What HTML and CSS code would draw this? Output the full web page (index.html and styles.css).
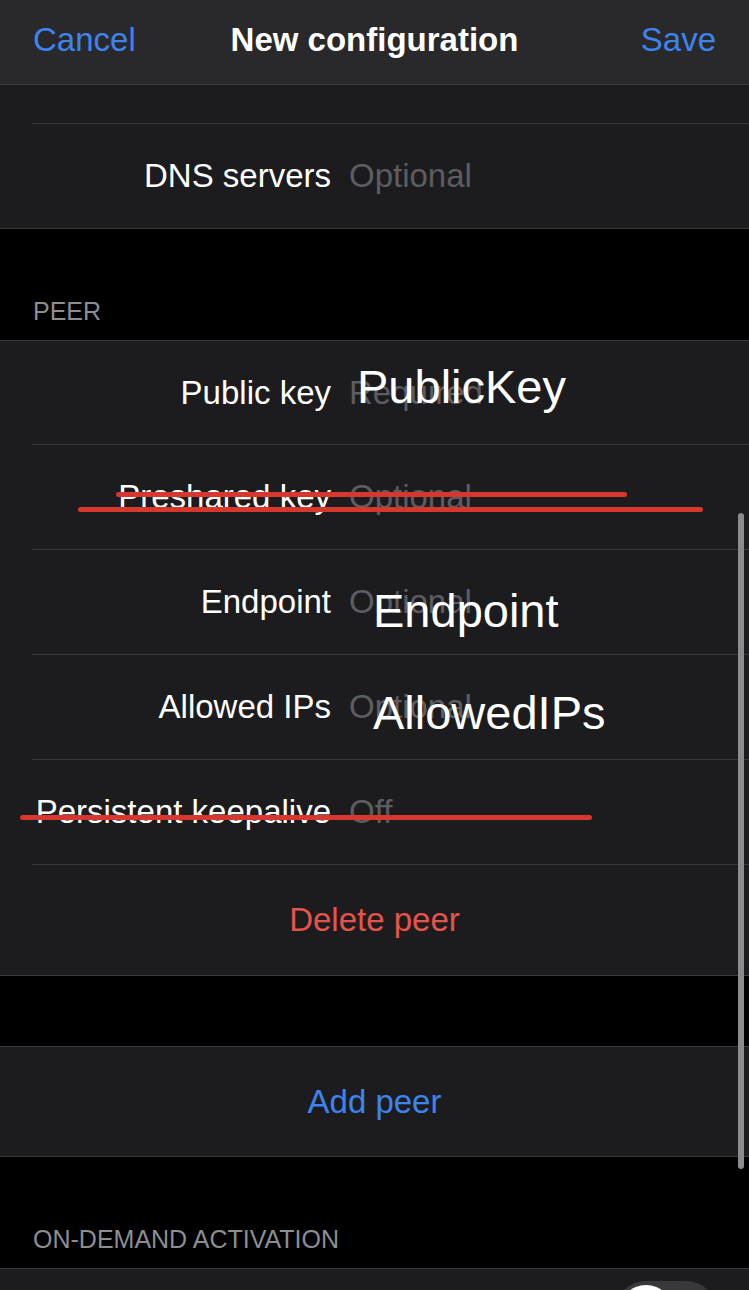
FILE: index.html
```html
<!DOCTYPE html>
<html lang="en">
<head>
  <meta charset="UTF-8">
  <meta name="viewport" content="width=device-width, initial-scale=1.0">
  <title>New configuration</title>
  <link rel="stylesheet" href="styles.css">
</head>
<body>
  <div class="screen">

    <!-- Navigation bar -->
    <header class="navbar">
      <span class="nav-btn">Cancel</span>
      <span class="nav-title">New configuration</span>
      <span class="nav-btn nav-right">Save</span>
    </header>

    <!-- Interface section (scrolled) -->
    <section class="group group-top">
      <div class="cell cell-partial"></div>
      <div class="cell">
        <span class="label">DNS servers</span>
        <span class="value">Optional</span>
      </div>
    </section>

    <!-- Peer section -->
    <div class="section-header">Peer</div>
    <section class="group">
      <div class="cell">
        <span class="label">Public key</span>
        <span class="value">Required</span>
      </div>
      <div class="cell">
        <span class="label">Preshared key</span>
        <span class="value">Optional</span>
      </div>
      <div class="cell">
        <span class="label">Endpoint</span>
        <span class="value">Optional</span>
      </div>
      <div class="cell">
        <span class="label">Allowed IPs</span>
        <span class="value">Optional</span>
      </div>
      <div class="cell">
        <span class="label">Persistent keepalive</span>
        <span class="value">Off</span>
      </div>
      <div class="cell cell-action cell-delete">Delete peer</div>
    </section>

    <div class="spacer"></div>
    <section class="group">
      <div class="cell cell-action cell-add">Add peer</div>
    </section>

    <!-- On-demand section -->
    <div class="section-header">On-demand activation</div>
    <section class="group">
      <div class="cell cell-toggle">
        <span class="toggle"><span class="knob"></span></span>
      </div>
    </section>

    <!-- Annotations drawn over the screenshot -->
    <div class="note note-pubkey">PublicKey</div>
    <div class="note note-endpoint">Endpoint</div>
    <div class="note note-allowed">AllowedIPs</div>
    <div class="strike strike-1"></div>
    <div class="strike strike-2"></div>
    <div class="strike strike-3"></div>

    <div class="scrollbar"></div>
  </div>
</body>
</html>
```

FILE: styles.css
```css
/* Global styling */
html, body { margin: 0; padding: 0; background-color: #000; }
body { font-family: "Liberation Sans", Arial, sans-serif; color: #fff; }
.screen { position: relative; width: 749px; height: 1290px; overflow: hidden; background-color: #000; }

/* Navigation bar */
.navbar { display: grid; grid-template-columns: 1fr auto 1fr; align-items: center; height: 85px; box-sizing: border-box; padding: 0 33px 5px; background-color: #29292b; border-bottom: 1px solid #3b3b3e; font-size: 33px; }
.nav-btn { color: #3e84ef; }
.nav-right { text-align: right; }
.nav-title { font-weight: bold; color: #fff; }

/* Grouped table */
.group { background-color: #1c1c1e; border-top: 1px solid #3a3a3d; border-bottom: 1px solid #3a3a3d; }
.group-top { border-top: none; }
.cell { display: flex; align-items: center; height: 104px; margin-left: 32px; border-top: 1px solid #38383b; font-size: 33px; }
.cell:first-child { border-top: none; height: 103px; }
.cell.cell-partial { height: 38px; }
.label { flex: none; width: 299px; text-align: right; white-space: nowrap; }
.value { margin-left: 18px; color: #5c5c61; white-space: nowrap; }
.cell.cell-action { justify-content: center; padding-right: 32px; }
.cell.cell-delete { height: 110px; color: #e4544b; }
.cell.cell-add { height: 109px; color: #3e84ef; }
.cell.cell-toggle { height: 86px; justify-content: flex-end; padding-right: 32px; }

.section-header { display: flex; align-items: flex-end; height: 111px; box-sizing: border-box; padding: 0 33px 14px; font-size: 25px; line-height: 30px; color: #8d8d92; text-transform: uppercase; }
.spacer { height: 70px; }

/* Switch */
.toggle { position: relative; width: 102px; height: 62px; border-radius: 31px; background-color: #39393d; }
.toggle .knob { position: absolute; left: 4px; top: 4px; width: 54px; height: 54px; border-radius: 50%; background-color: #fff; }

/* Annotations */
.note { position: absolute; font-family: "Liberation Sans", Arial, sans-serif; font-size: 47px; line-height: 48px; color: #fff; white-space: nowrap; }
.note-pubkey { left: 357px; top: 363px; }
.note-endpoint { left: 373px; top: 587px; }
.note-allowed { left: 373px; top: 689px; }

.strike { position: absolute; height: 5px; border-radius: 3px; background-color: #d7372c; }
.strike-1 { left: 116px; top: 492px; width: 511px; }
.strike-2 { left: 78px; top: 507px; width: 625px; }
.strike-3 { left: 20px; top: 815px; width: 572px; }

.scrollbar { position: absolute; left: 738px; top: 513px; width: 6px; height: 656px; border-radius: 3px; background-color: #8b8b8e; }
```
